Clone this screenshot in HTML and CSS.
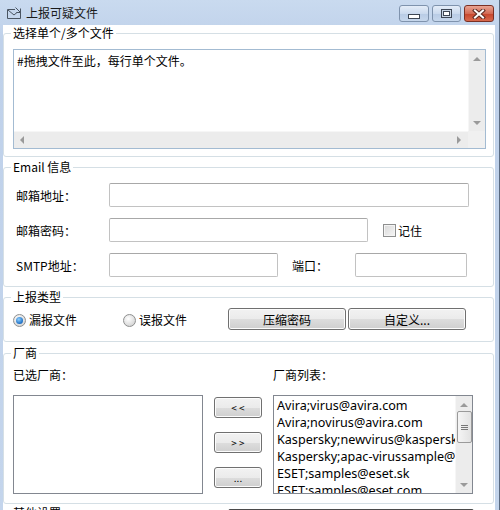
FILE: index.html
```html
<!DOCTYPE html>
<html lang="zh-CN">
<head>
  <meta charset="UTF-8">
  <title>上报可疑文件</title>
  <link rel="stylesheet" href="styles.css">
</head>
<body>
  <div class="window">
    <div class="titlebar">
      <svg class="app-icon" width="16" height="14" viewBox="0 0 16 14">
        <path d="M1.5 3.5 V12.5 H14.5 V6" fill="none" stroke="#4a5562" stroke-width="1"/>
        <path d="M1.5 3.5 H9" fill="none" stroke="#4a5562" stroke-width="1"/>
        <path d="M2 4 L8 9 L11 6.5" fill="none" stroke="#4a5562" stroke-width="1"/>
        <path d="M9.5 1.5 L14.5 6.5 M14.5 2.5 V6.5 H10.5" fill="none" stroke="#4a5562" stroke-width="1"/>
      </svg>
      <span class="title">上报可疑文件</span>
      <div class="caption-buttons">
        <span class="cap cap-min"><i></i></span>
        <span class="cap cap-max"><i></i></span>
        <span class="cap cap-close">
          <svg width="14" height="10" viewBox="0 0 14 10">
            <path d="M3 1.5 L11 8.5 M11 1.5 L3 8.5" stroke="#5a2a22" stroke-width="4" stroke-linecap="square"/>
            <path d="M3 1.5 L11 8.5 M11 1.5 L3 8.5" stroke="#ffffff" stroke-width="2" stroke-linecap="square"/>
          </svg>
        </span>
      </div>
    </div>

    <div class="client">
      <!-- 文件列表 -->
      <section class="group group-files">
        <div class="group-title">选择单个/多个文件</div>
        <div class="memo">
          <div class="memo-text">#拖拽文件至此<span class="punct">，</span>每行单个文件。</div>
          <div class="vscroll">
            <span class="arrow arrow-up"></span>
            <span class="arrow arrow-down"></span>
          </div>
          <div class="hscroll">
            <span class="arrow arrow-left"></span>
            <span class="arrow arrow-right"></span>
          </div>
          <div class="corner"></div>
        </div>
      </section>

      <!-- 邮箱设置 -->
      <section class="group group-email">
        <div class="group-title">Email 信息</div>
        <div class="group-body">
          <div class="row">
            <label class="field-label">邮箱地址：</label>
            <input class="edit edit-mail" type="text">
          </div>
          <div class="row">
            <label class="field-label">邮箱密码：</label>
            <input class="edit edit-pass" type="password">
            <span class="checkbox"></span>
            <span class="check-label">记住</span>
          </div>
          <div class="row">
            <label class="field-label">SMTP地址：</label>
            <input class="edit edit-smtp" type="text">
            <label class="port-label">端口：</label>
            <input class="edit edit-port" type="text">
          </div>
        </div>
      </section>

      <!-- 上报类型 -->
      <section class="group group-type">
        <div class="group-title">上报类型</div>
        <div class="group-body">
          <div class="row type-row">
            <span class="radio checked"></span>
            <span class="radio-label first">漏报文件</span>
            <span class="radio"></span>
            <span class="radio-label">误报文件</span>
            <button class="btn btn-wide btn-pack">压缩密码</button>
            <button class="btn btn-wide">自定义...</button>
          </div>
        </div>
      </section>

      <!-- 厂商 -->
      <section class="group group-vendor">
        <div class="group-title">厂商</div>
        <div class="group-body">
          <div class="vendor-labels">
            <span class="selected-label">已选厂商：</span>
            <span>厂商列表：</span>
          </div>
          <div class="vendor-body">
            <div class="listbox list-selected"></div>
            <div class="move-buttons">
              <button class="btn btn-small">&lt; &lt;</button>
              <button class="btn btn-small">&gt; &gt;</button>
              <button class="btn btn-small">...</button>
            </div>
            <div class="listbox list-all">
              <ul class="items">
                <li>Avira;virus@avira.com</li>
                <li>Avira;novirus@avira.com</li>
                <li>Kaspersky;newvirus@kaspersky.com</li>
                <li>Kaspersky;apac-virussample@kaspersky.com</li>
                <li>ESET;samples@eset.sk</li>
                <li>ESET;samples@eset.com</li>
              </ul>
              <div class="vscroll list-scroll">
                <span class="arrow arrow-up"></span>
                <span class="thumb"><i></i><i></i><i></i></span>
                <span class="arrow arrow-down"></span>
              </div>
            </div>
          </div>
        </div>
      </section>

      <!-- 其他设置 -->
      <section class="group group-other">
        <div class="group-head">
          <div class="group-title">其他设置</div>
          <div class="other-box"></div>
        </div>
      </section>
    </div>
  </div>
</body>
</html>
```

FILE: styles.css
```css
* {
  box-sizing: border-box;
}
body {
  margin: 0;
  font-family: "Noto Sans CJK SC", "Noto Sans", sans-serif;
  font-size: 12px;
  color: #000;
}
.window {
  width: 500px;
  height: 510px;
  overflow: hidden;
  background: linear-gradient(to bottom, #c9daef, #bfd1ea 40px, #c4d5ec);
  border-right: 1px solid #5a6a80;
}

/* title bar */
.titlebar {
  height: 25px;
  display: flex;
  align-items: center;
  padding-left: 6px;
}
.app-icon {
  margin-top: 1px;
}
.title {
  margin-left: 4px;
  font-size: 12px;
  line-height: 16px;
  color: #1a1a1a;
}
.caption-buttons {
  margin-left: auto;
  margin-right: 5px;
  display: flex;
  gap: 3px;
  align-self: flex-start;
  margin-top: 5px;
}
.cap {
  width: 30px;
  height: 17px;
  border: 1px solid #7f93ad;
  border-radius: 3px;
  background: linear-gradient(to bottom, #e4edf8, #cbdaee 50%, #b8cbe5 51%, #c6d7ec);
  display: flex;
  align-items: center;
  justify-content: center;
}
.cap-max {
  width: 29px;
}
.cap-min i {
  width: 12px;
  height: 5px;
  margin-top: 5px;
  border: 1px solid #3d4654;
  background: #fff;
}
.cap-max i {
  width: 11px;
  height: 9px;
  border: 1px solid #3d4654;
  background: #fff;
  box-shadow: inset 0 0 0 1px #c9d6e6, inset 0 0 0 2px #3d4654;
}
.cap-close {
  width: 30px;
  border-color: #7a3024;
  background: linear-gradient(to bottom, #e9a493, #d36b55 50%, #c5442b 51%, #d8694d);
}

/* client area */
.client {
  margin: 0 4px 0 3px;
  height: 485px;
  background: #fff;
  padding-top: 8px;
  overflow: hidden;
}
.group {
  border: 1px solid #d5dfe5;
  border-radius: 3px;
  margin-right: 1px;
}
.group-title {
  width: fit-content;
  margin: -9px 0 0 7px;
  padding: 0 2px;
  line-height: 16px;
  background: #fff;
}

/* fullwidth colons drawn centred, like the dialog font */
.field-label,
.port-label,
.vendor-labels,
.punct {
  font-family: "Noto Sans CJK TC", "Noto Sans CJK SC", sans-serif;
}

/* file memo */
.group-files {
  padding-bottom: 7px;
}
.memo {
  margin: 8px 7px 0 9px;
  height: 100px;
  border: 1px solid #a3bbd2;
  display: grid;
  grid-template-columns: 1fr 17px;
  grid-template-rows: 1fr 17px;
}
.memo-text {
  padding: 3px 3px;
  line-height: 16px;
}
.vscroll {
  background: #ececec;
  border-left: 1px solid #f6f6f6;
  display: flex;
  flex-direction: column;
  justify-content: space-between;
  align-items: center;
  padding: 7px 0 6px;
}
.hscroll {
  background: #ececec;
  border-top: 1px solid #f6f6f6;
  display: flex;
  justify-content: space-between;
  align-items: center;
  padding: 0 7px 0 6px;
}
.corner {
  background: #f0f0f0;
}
.arrow {
  width: 0;
  height: 0;
  border: 4px solid transparent;
}
.arrow-up {
  border-top: 0;
  border-bottom: 4px solid #9a9a9a;
}
.arrow-down {
  border-bottom: 0;
  border-top: 4px solid #9a9a9a;
}
.arrow-left {
  border-left: 0;
  border-right: 4px solid #9a9a9a;
}
.arrow-right {
  border-right: 0;
  border-left: 4px solid #9a9a9a;
}

/* email settings */
.group-email {
  margin-top: 10px;
  padding-bottom: 9px;
}
.group-email .group-body {
  padding-left: 12px;
}
.row {
  display: flex;
  align-items: center;
  height: 24px;
  margin-top: 11px;
}
.group-email .row:first-child {
  margin-top: 8px;
}
.field-label {
  width: 93px;
}
.edit {
  height: 24px;
  border: 1px solid #c2c2c2;
  border-top-color: #a8a8a8;
  border-radius: 2px;
  background: #fff;
  font: inherit;
  padding: 0 3px;
}
.edit-mail {
  width: 360px;
}
.edit-pass {
  width: 259px;
}
.checkbox {
  width: 13px;
  height: 13px;
  margin-left: 15px;
  border: 1px solid #8e8f8f;
  background: linear-gradient(135deg, #d8d8d8, #f6f6f6);
  box-shadow: inset 0 0 0 1px #f4f4f4;
}
.check-label {
  margin-left: 2px;
}
.edit-smtp {
  width: 169px;
}
.port-label {
  margin-left: 14px;
  width: 63px;
}
.edit-port {
  width: 112px;
}

/* report type */
.group-type {
  margin-top: 10px;
  padding-bottom: 11px;
}
.group-type .group-body {
  padding: 0 27px 0 9px;
}
.type-row {
  height: 22px;
  margin-top: 3px;
}
.radio {
  width: 13px;
  height: 13px;
  border-radius: 50%;
  border: 1px solid #8e8f8f;
  background: radial-gradient(circle at 40% 35%, #ffffff, #d4d4d4 80%);
  display: flex;
  align-items: center;
  justify-content: center;
  margin-top: 2px;
}
.radio.checked::after {
  content: "";
  width: 7px;
  height: 7px;
  border-radius: 50%;
  background: radial-gradient(circle at 40% 35%, #8fd0ff, #1d6fc4 70%, #0d4f9a);
}
.radio-label {
  margin-left: 3px;
  margin-top: 1px;
}
.radio-label.first {
  width: 94px;
}
.btn {
  font: inherit;
  color: #000;
  border: 1px solid #707070;
  border-radius: 3px;
  background: linear-gradient(to bottom, #f2f2f2, #ebebeb 50%, #dddddd 51%, #cfcfcf);
  box-shadow: inset 0 0 0 1px #fcfcfc;
  padding: 0;
  height: 22px;
}
.btn-wide {
  width: 118px;
  margin-left: 2px;
}
.btn-pack {
  margin-left: auto;
}

/* vendors */
.group-vendor {
  margin-top: 11px;
  padding-bottom: 9px;
}
.group-vendor .group-body {
  padding-left: 9px;
}
.vendor-labels {
  display: flex;
  margin-top: 6px;
  line-height: 16px;
}
.selected-label {
  width: 260px;
}
.vendor-body {
  display: flex;
  margin-top: 12px;
  height: 99px;
}
.listbox {
  border: 1px solid #828790;
  background: #fff;
  height: 99px;
}
.list-selected {
  width: 190px;
}
.move-buttons {
  width: 48px;
  margin: 2px 11px 0 11px;
  display: flex;
  flex-direction: column;
  gap: 14px;
}
.btn-small {
  height: 21px;
  font-size: 10px;
}
.list-all {
  width: 200px;
  display: flex;
  overflow: hidden;
}
.items {
  list-style: none;
  margin: 0;
  padding: 1px 0 0 3px;
  flex: 1;
  overflow: hidden;
  white-space: nowrap;
  font-family: "Noto Sans", sans-serif;
  font-size: 12.6px;
  line-height: 17px;
}
.list-scroll {
  width: 17px;
  padding: 7px 0 6px;
  border-left: 1px solid #f6f6f6;
}
.thumb {
  width: 15px;
  height: 32px;
  margin-top: 4px;
  margin-bottom: auto;
  border: 1px solid #9a9a9a;
  border-radius: 2px;
  background: linear-gradient(to right, #f5f5f5, #e2e2e2);
  display: flex;
  flex-direction: column;
  align-items: center;
  justify-content: center;
  gap: 1px;
}
.thumb i {
  width: 7px;
  height: 1px;
  background: #777;
}

/* other settings */
.group-other {
  margin-top: 9px;
  height: 40px;
}
.group-head {
  display: flex;
  margin-top: -9px;
}
.group-head .group-title {
  margin-top: 0;
}
.other-box {
  margin: 4px 0 0 165px;
  width: 246px;
  height: 30px;
  border: 1px solid #4a4a4a;
  border-radius: 2px;
  background: #f0f0f0;
}
```
